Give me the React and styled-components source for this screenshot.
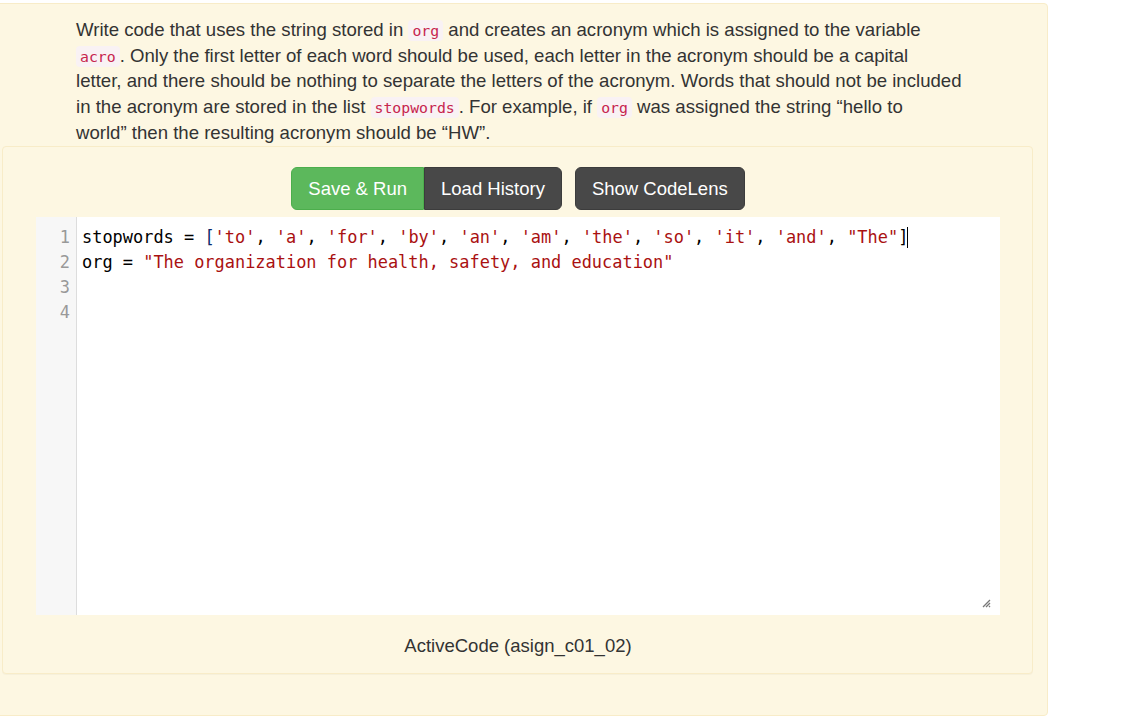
import styled, { createGlobalStyle } from 'styled-components';

const GlobalStyle = createGlobalStyle`
  html, body {
    margin: 0;
    padding: 0;
    background: #ffffff;
    overflow: hidden;
  }
  body {
    font-family: "Liberation Sans", Arial, sans-serif;
    color: #333333;
  }
`;

const Section = styled.section`
  box-sizing: border-box;
  width: 1060px;
  margin: 3px 0 0 -12px;
  padding: 13px 0 41px 0;
  background-color: #fdf7e2;
  border: 1px solid #f8ecc8;
  border-radius: 4px;
`;

const Description = styled.p`
  box-sizing: border-box;
  width: 1000px;
  margin: 0;
  padding-left: 87px;
  font-size: 18.6px;
  line-height: 25.7px;
  color: #333333;
`;

const InlineCode = styled.code`
  padding: 2px 4px;
  font-family: "DejaVu Sans Mono", "Liberation Mono", monospace;
  font-size: 14.8px;
  line-height: 1;
  color: #c7254e;
  background-color: #f9f2f4;
  border-radius: 4px;
`;

const ActiveCodeBox = styled.div`
  box-sizing: border-box;
  width: 1031px;
  margin: 0 0 0 13px;
  padding: 20px 32px 15px 33px;
  background-color: #fdf7e2;
  border: 1px solid #f8ecc8;
  border-radius: 4px;
  box-shadow: 0 1px 1px rgba(0, 0, 0, 0.03);
`;

const Toolbar = styled.div`
  display: flex;
  justify-content: center;
  gap: 13px;
  margin-bottom: 7px;
`;

const ButtonGroup = styled.div`
  display: flex;
`;

const Button = styled.button`
  box-sizing: border-box;
  height: 43px;
  padding: 0 16px;
  font-family: "Liberation Sans", Arial, sans-serif;
  font-size: 18.5px;
  line-height: 41px;
  color: #ffffff;
  background-color: ${({ $variant }) => ($variant === 'success' ? '#5cb85c' : '#484848')};
  border: 1px solid ${({ $variant }) => ($variant === 'success' ? '#4cae4c' : '#3c3c3c')};
  border-radius: 6px;
  cursor: pointer;
`;

const GroupButton = styled(Button)`
  &:first-child {
    border-top-right-radius: 0;
    border-bottom-right-radius: 0;
  }
  &:last-child {
    border-top-left-radius: 0;
    border-bottom-left-radius: 0;
  }
`;

const Editor = styled.div`
  position: relative;
  display: flex;
  height: 398px;
  background-color: #ffffff;
  font-family: "DejaVu Sans Mono", "Liberation Mono", monospace;
  font-size: 16.95px;
  line-height: 25px;
`;

const Gutter = styled.div`
  box-sizing: border-box;
  width: 41px;
  padding: 8px 6px 0 0;
  background-color: #f7f7f7;
  border-right: 1px solid #dddddd;
  color: #999999;
  text-align: right;
`;

const Lines = styled.div`
  flex: 1;
  padding: 8px 0 0 5px;
  white-space: pre;
`;

const Line = styled.div`
  height: 25px;
  color: #000000;
`;

const Str = styled.span`
  color: #aa1111;
`;

const Bracket = styled.span`
  color: ${({ $open }) => ($open ? '#0b2a6b' : '#000000')};
`;

const Cursor = styled.span`
  display: inline-block;
  width: 1px;
  height: 21px;
  margin-left: -1px;
  vertical-align: -5px;
  background-color: #000000;
`;

const Grip = styled.svg`
  position: absolute;
  right: 9px;
  bottom: 7px;
`;

const Caption = styled.div`
  margin-top: 18px;
  text-align: center;
  font-size: 18.5px;
  line-height: 25.7px;
  color: #333333;
`;

const stopwords = ['to', 'a', 'for', 'by', 'an', 'am', 'the', 'so', 'it', 'and'];

const App = () => {
  return (
    <>
      <GlobalStyle />
      <Section>
        <Description>
          Write code that uses the string stored in <InlineCode>org</InlineCode> and creates an
          acronym which is assigned to the variable
          <br />
          <InlineCode>acro</InlineCode>. Only the first letter of each word should be used, each
          letter in the acronym should be a capital
          <br />
          letter, and there should be nothing to separate the letters of the acronym. Words that
          should not be included
          <br />
          in the acronym are stored in the list <InlineCode>stopwords</InlineCode>. For example,
          if <InlineCode>org</InlineCode> was assigned the string “hello to
          <br />
          world” then the resulting acronym should be “HW”.
        </Description>

        <ActiveCodeBox>
          <Toolbar>
            <ButtonGroup>
              <GroupButton $variant="success">Save &amp; Run</GroupButton>
              <GroupButton>Load History</GroupButton>
            </ButtonGroup>
            <Button>Show CodeLens</Button>
          </Toolbar>

          <Editor>
            <Gutter>
              {[1, 2, 3, 4].map((n) => (
                <div key={n}>{n}</div>
              ))}
            </Gutter>
            <Lines>
              <Line>
                {'stopwords = '}
                <Bracket $open>[</Bracket>
                {stopwords.map((w) => (
                  <span key={w}>
                    <Str>'{w}'</Str>
                    {', '}
                  </span>
                ))}
                <Str>"The"</Str>
                <Bracket>]</Bracket>
                <Cursor />
              </Line>
              <Line>
                {'org = '}
                <Str>"The organization for health, safety, and education"</Str>
              </Line>
              <Line />
              <Line />
            </Lines>
            <Grip width="10" height="10" viewBox="0 0 10 10">
              <path d="M9 2 L2 9 M9 5 L5 9 M9 8 L8 9" stroke="#777" strokeWidth="1.3" />
            </Grip>
          </Editor>

          <Caption>ActiveCode (asign_c01_02)</Caption>
        </ActiveCodeBox>
      </Section>
    </>
  );
};

export default App;
